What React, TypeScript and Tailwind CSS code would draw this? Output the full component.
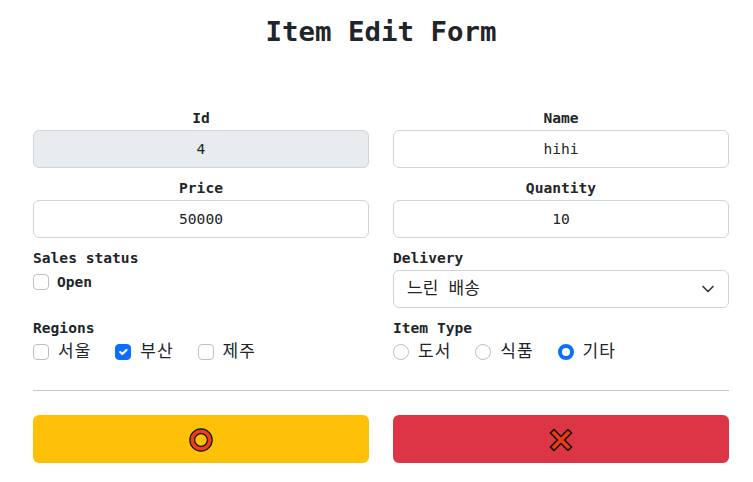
const font = "font-['DejaVu_Sans_Mono','Noto_Sans_CJK_KR',monospace]"

function Check({ checked, label }: { checked?: boolean; label: string }) {
  return (
    <label className="flex items-center">
      <span className={`mt-px flex h-4 w-4 items-center justify-center rounded-[4px] border ${checked ? 'border-[#0d6efd] bg-[#0d6efd]' : 'border-[#bfbfbf] bg-white'}`}>
        {checked && (
          <svg viewBox="0 0 20 20" className="h-4 w-4">
            <path d="M6 10l3 3 6-6" fill="none" stroke="#fff" strokeWidth="3" strokeLinecap="round" strokeLinejoin="round" />
          </svg>
        )}
      </span>
      <span className="ml-[9px] w-[33.3px] text-[17px] leading-[22px] tracking-[1px] text-[#212529]">{label}</span>
    </label>
  )
}

function Radio({ checked, label }: { checked?: boolean; label: string }) {
  return (
    <label className="flex items-center">
      <span className={`mt-px h-4 w-4 rounded-full ${checked ? 'border-[4px] border-[#0d6efd] bg-white' : 'border border-[#bfbfbf] bg-white'}`} />
      <span className="ml-[9px] w-[33.3px] text-[17px] leading-[22px] tracking-[1px] text-[#212529]">{label}</span>
    </label>
  )
}

function Field({ label, value, disabled }: { label: string; value: string; disabled?: boolean }) {
  return (
    <div className="text-center">
      <label className="block h-6 text-[14.6px]/6 font-bold text-[#212529]">{label}</label>
      <input
        readOnly
        value={value}
        className={`block h-[38px] w-full rounded-[6px] border border-[#ced4da] pb-px text-center text-[14.6px] text-[#212529] outline-none ${disabled ? 'bg-[#e9ecef]' : 'bg-white'} ${font}`}
      />
    </div>
  )
}

export default function App() {
  return (
    <div className={`min-h-[482px] bg-white pl-[33px] pr-6 text-[#212529] ${font}`}>
      <h1 className="pt-[14px] pb-[56px] text-center text-[27.4px]/[36px] font-bold">Item Edit Form</h1>

      <div className="grid grid-cols-2 gap-x-6 gap-y-2">
        <Field label="Id" value="4" disabled />
        <Field label="Name" value="hihi" />
        <Field label="Price" value="50000" />
        <Field label="Quantity" value="10" />

        <div>
          <div className="h-6 text-[14.6px]/6 font-bold">Sales status</div>
          <label className="flex items-center">
            <span className="h-4 w-4 rounded-[4px] border border-[#bfbfbf] bg-white" />
            <span className="ml-2 text-[14.6px]/6 font-bold">Open</span>
          </label>
        </div>
        <div>
          <div className="h-6 text-[14.6px]/6 font-bold">Delivery</div>
          <div className="relative">
            <div className="flex h-[38px] items-center rounded-[6px] border border-[#ced4da] bg-white pl-[13px] text-[17px]">느린 배송</div>
            <svg viewBox="0 0 16 16" className="absolute top-[11px] right-[13px] h-4 w-4">
              <path d="M3 5.5l5 5 5-5" fill="none" stroke="#343a40" strokeWidth="1.7" strokeLinecap="round" strokeLinejoin="round" />
            </svg>
          </div>
        </div>

        <div>
          <div className="h-6 text-[14.6px]/6 font-bold">Regions</div>
          <div className="flex gap-6">
            <Check label="서울" />
            <Check checked label="부산" />
            <Check label="제주" />
          </div>
        </div>
        <div>
          <div className="h-6 text-[14.6px]/6 font-bold">Item Type</div>
          <div className="flex gap-6">
            <Radio label="도서" />
            <Radio label="식품" />
            <Radio checked label="기타" />
          </div>
        </div>
      </div>

      <hr className="mt-[28px] mb-6 border-[#c8c8c8]" />

      <div className="grid grid-cols-2 gap-x-6">
        <button className="flex h-12 items-center justify-center rounded-[6px] bg-[#ffc107] pt-0.5">
          <svg viewBox="0 0 24 24" className="h-6 w-6">
            <circle cx="12" cy="12" r="8.75" fill="none" stroke="#111" strokeWidth="6" />
            <circle cx="12" cy="12" r="8.75" fill="none" stroke="#e8401c" strokeWidth="3.6" />
          </svg>
        </button>
        <button className="flex h-12 items-center justify-center rounded-[6px] bg-[#dc3545] pt-0.5">
          <svg viewBox="0 0 24 24" className="h-6 w-6">
            <path d="M5 5l14 14M19 5L5 19" fill="none" stroke="#111" strokeWidth="6.5" strokeLinecap="square" />
            <path d="M5 5l14 14M19 5L5 19" fill="none" stroke="#f03a10" strokeWidth="3.5" strokeLinecap="square" />
          </svg>
        </button>
      </div>
    </div>
  )
}
